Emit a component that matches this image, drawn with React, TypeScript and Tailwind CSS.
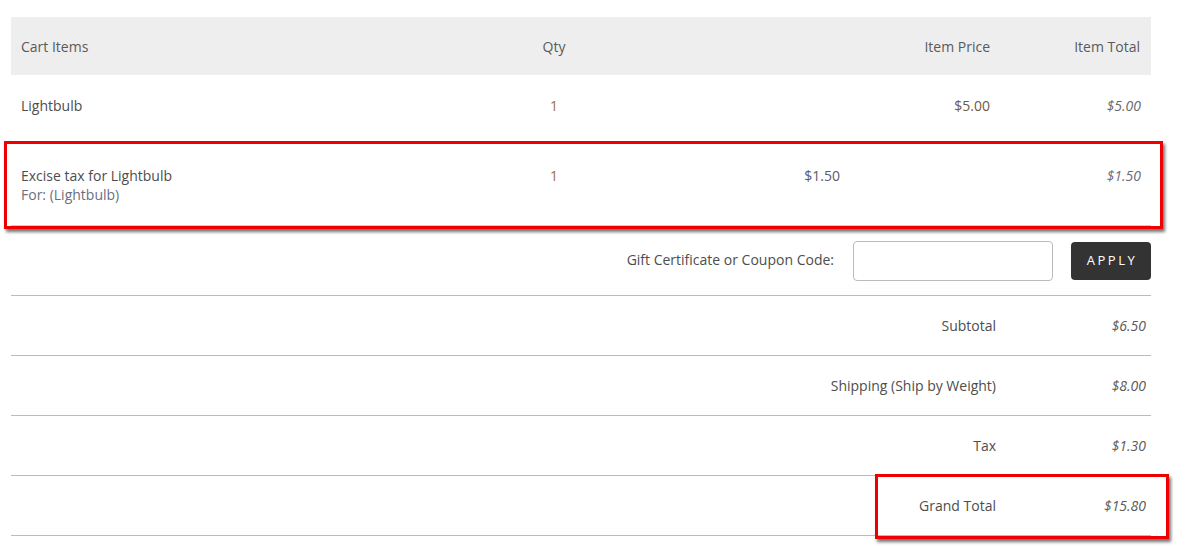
import React from 'react';

const font = { fontFamily: '"Open Sans", "Liberation Sans", sans-serif' };

const totals = [
  { label: 'Subtotal', value: '$6.50' },
  { label: 'Shipping (Ship by Weight)', value: '$8.00' },
  { label: 'Tax', value: '$1.30' },
  { label: 'Grand Total', value: '$15.80', marked: true },
];

export default function App() {
  return (
    <div className="w-[1190px] h-[547px] bg-white text-[14px] text-[#4d4d4d] overflow-hidden" style={font}>
      <div className="ml-[11px] mt-[17px] w-[1140px]">
        {/* header */}
        <div className="grid grid-cols-[493px_100px_396px_151px] h-[58px] items-center bg-[#eeeeee] text-[#5a5a5a]">
          <div className="pl-[10px]">Cart Items</div>
          <div className="text-center">Qty</div>
          <div className="text-right pr-[10px]">Item Price</div>
          <div className="text-right pr-[11px]">Item Total</div>
        </div>

        {/* item row */}
        <div className="grid grid-cols-[493px_100px_396px_151px] h-[60px] items-center">
          <div className="pl-[10px]">Lightbulb</div>
          <div className="text-center text-[#a0703a]">1</div>
          <div className="text-right pr-[10px] text-[#6e5a44]">$5.00</div>
          <div className="text-right pr-[10px] italic text-[#6a6a6a]">$5.00</div>
        </div>

        {/* excise row, highlighted */}
        <div className="relative">
          <div className="grid grid-cols-[493px_100px_246px_150px_151px] pt-[31px] pb-[21px] border-b border-[#ccc]">
            <div className="pl-[10px] leading-[19px]">
              <div>Excise tax for Lightbulb</div>
              <div className="text-[#6b6f80]">For: (Lightbulb)</div>
            </div>
            <div className="text-center leading-[19px] text-[#a0703a]">1</div>
            <div className="text-right pr-[10px] leading-[19px] text-[#5a5a70]">$1.50</div>
            <div />
            <div className="text-right pr-[10px] leading-[19px] italic text-[#6a6a7a]">$1.50</div>
          </div>
          <div className="absolute left-[-7px] top-[6px] w-[1159px] h-[88px] border-[3px] border-[#ee0000] shadow-[2px_3px_3px_rgba(0,0,0,0.55)] pointer-events-none" />
        </div>

        {/* coupon */}
        <div className="flex items-center justify-end pt-[15px] pb-[14px]">
          <span className="mr-[19px] mb-[3px]">Gift Certificate or Coupon Code:</span>
          <input className="w-[200px] h-[40px] border border-[#bbb] rounded-[4px] bg-white" />
          <button className="ml-[18px] w-[80px] h-[38px] rounded-[4px] bg-[#333] text-white text-[13px] tracking-[2.5px] pl-[2px]">
            APPLY
          </button>
        </div>

        {/* totals */}
        <div className="border-t border-[#bbb]">
          {totals.map((t) => (
            <div key={t.label} className="relative flex h-[60px] items-center border-b border-[#bbb]">
              <div className="flex-1 text-right pr-[155px]">{t.label}</div>
              <div className="absolute right-[5px] italic text-[#5a5a5a]">{t.value}</div>
              {t.marked && (
                <div className="absolute left-[864px] top-[-2px] w-[294px] h-[65px] border-[3px] border-[#ee0000] shadow-[2px_3px_3px_rgba(0,0,0,0.55)] pointer-events-none" />
              )}
            </div>
          ))}
        </div>
      </div>
    </div>
  );
}
